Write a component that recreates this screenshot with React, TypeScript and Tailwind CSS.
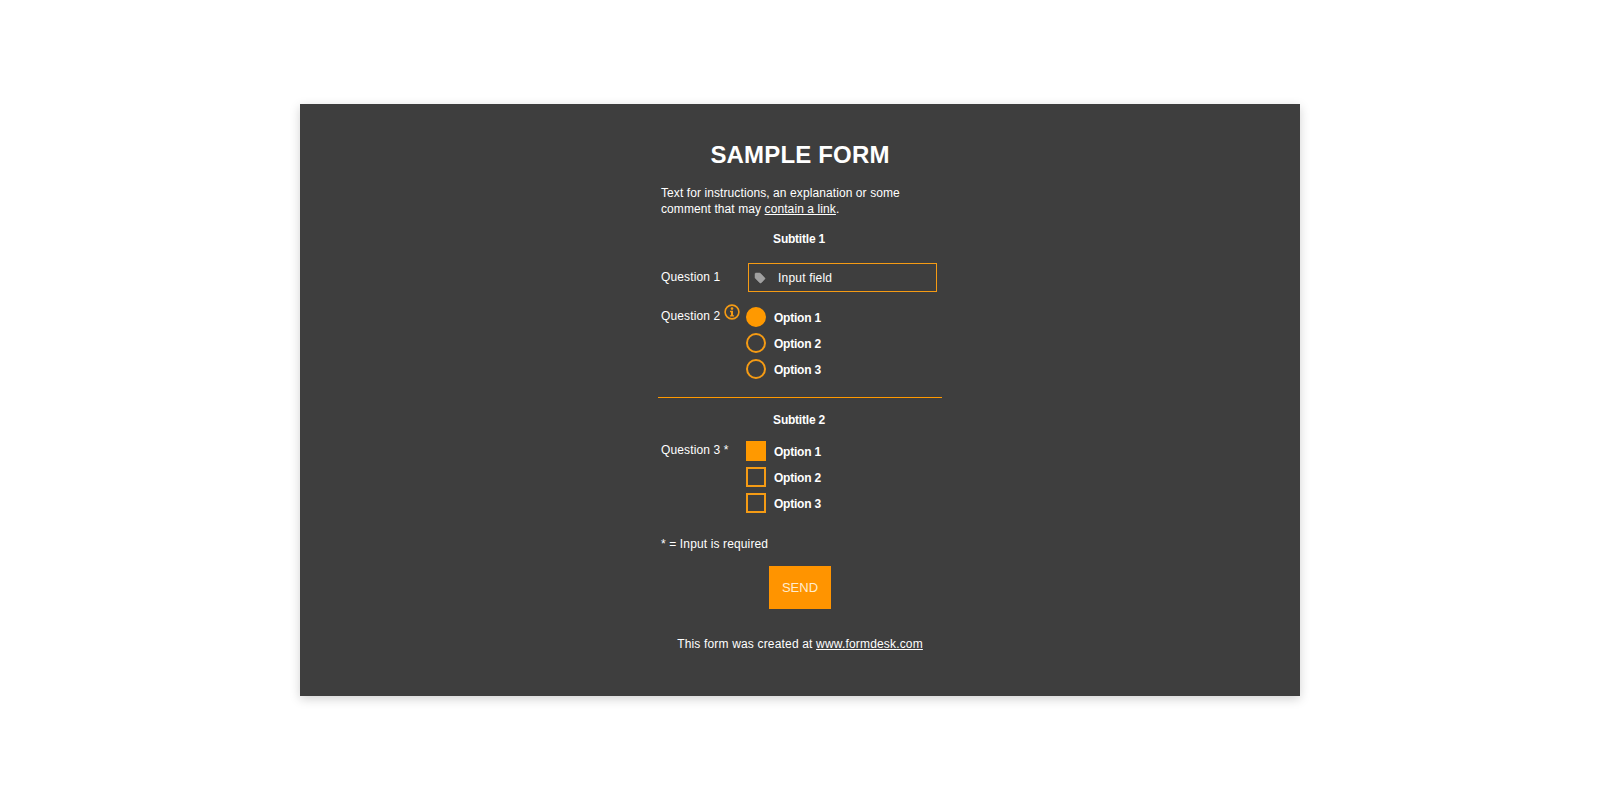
import { Tag } from "lucide-react";

const orange = "border-[#f59b14]";

function Option({ label, round, checked }: { label: string; round?: boolean; checked?: boolean }) {
  return (
    <div className="flex h-[26px] items-center">
      <span
        className={`h-5 w-5 border-2 ${orange} ${round ? "rounded-full" : ""} ${checked ? "border-[#ff9900] bg-[#ff9900]" : ""}`}
      />
      <span className="ml-2 mt-0.5 font-bold tracking-[-0.22px] text-white">{label}</span>
    </div>
  );
}

export default function App() {
  return (
    <div className="min-h-[800px] bg-white pt-[104px] font-['Liberation_Sans',Arial,sans-serif] text-xs leading-4 tracking-[0.13px] text-white">
      <div className="mx-auto h-[592px] w-[1000px] bg-[#3e3e3e] pt-[37px] shadow-[0_3px_10px_rgba(0,0,0,0.18)]">
        <div className="mx-auto w-[284px]">
          <h1 className="text-center text-2xl leading-7 font-bold tracking-[0.16px]">SAMPLE FORM</h1>

          <p className="mt-[16px] px-[3px] tracking-[0.09px]">
            Text for instructions, an explanation or some
            <br />
            comment that may <a className="underline">contain a link</a>.
          </p>

          <h2 className="mt-[14px] pr-[2px] text-center font-bold tracking-[-0.22px]">Subtitle 1</h2>

          <div className="mt-[16px] flex px-[3px]">
            <label className="mt-1.5 w-[87px]">Question 1</label>
            <div className={`flex h-[29px] w-[189px] items-center border pl-[5px] ${orange}`}>
              <Tag className="h-3 w-3 fill-[#a0a0a0] text-[#a0a0a0]" strokeWidth={1} />
              <span className="ml-[12px] tracking-[0.2px]">Input field</span>
            </div>
          </div>

          <div className="mt-[15px] flex px-[3px]">
            <label className="mt-px flex w-[85px] items-start">
              Question 2
              <svg viewBox="0 0 16 16" className="mt-[-4px] ml-[4px] h-4 w-4 shrink-0 text-[#f59b14]">
                <circle cx="8" cy="8" r="6.9" fill="none" stroke="currentColor" strokeWidth="1.6" />
                <circle cx="8" cy="4.6" r="1.3" fill="currentColor" />
                <path d="M6 6.8h3v4.4h1.1v1.4H5.9v-1.4h1.1V8.2h-1z" fill="currentColor" />
              </svg>
            </label>
            <div className="-mt-[3px]">
              <Option label="Option 1" round checked />
              <Option label="Option 2" round />
              <Option label="Option 3" round />
            </div>
          </div>

          <hr className="mt-[15px] border-t border-[#ff9900]" />

          <h2 className="mt-[14px] pr-[2px] text-center font-bold tracking-[-0.22px]">Subtitle 2</h2>

          <div className="mt-[13px] flex px-[3px]">
            <label className="mt-px w-[85px]">Question 3 *</label>
            <div className="-mt-[3px]">
              <Option label="Option 1" checked />
              <Option label="Option 2" />
              <Option label="Option 3" />
            </div>
          </div>

          <p className="mt-[20px] px-[3px]">* = Input is required</p>

          <div className="mt-[14px] flex justify-center">
            <button className="h-[43px] w-[62px] bg-[#ff9400] text-[13px] tracking-normal text-[#ffeccf]">SEND</button>
          </div>

          <p className="mt-[27px] text-center tracking-[0.17px]">
            This form was created at <a className="underline">www.formdesk.com</a>
          </p>
        </div>
      </div>
    </div>
  );
}
